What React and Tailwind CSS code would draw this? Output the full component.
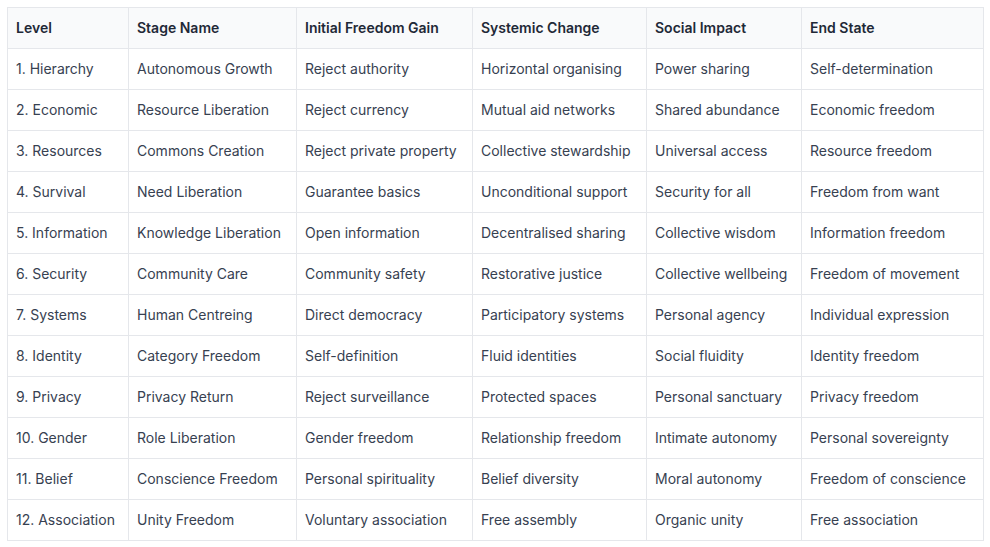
const rows = [
  ["1. Hierarchy","Autonomous Growth","Reject authority","Horizontal organising","Power sharing","Self-determination"],
  ["2. Economic","Resource Liberation","Reject currency","Mutual aid networks","Shared abundance","Economic freedom"],
  ["3. Resources","Commons Creation","Reject private property","Collective stewardship","Universal access","Resource freedom"],
  ["4. Survival","Need Liberation","Guarantee basics","Unconditional support","Security for all","Freedom from want"],
  ["5. Information","Knowledge Liberation","Open information","Decentralised sharing","Collective wisdom","Information freedom"],
  ["6. Security","Community Care","Community safety","Restorative justice","Collective wellbeing","Freedom of movement"],
  ["7. Systems","Human Centreing","Direct democracy","Participatory systems","Personal agency","Individual expression"],
  ["8. Identity","Category Freedom","Self-definition","Fluid identities","Social fluidity","Identity freedom"],
  ["9. Privacy","Privacy Return","Reject surveillance","Protected spaces","Personal sanctuary","Privacy freedom"],
  ["10. Gender","Role Liberation","Gender freedom","Relationship freedom","Intimate autonomy","Personal sovereignty"],
  ["11. Belief","Conscience Freedom","Personal spirituality","Belief diversity","Moral autonomy","Freedom of conscience"],
  ["12. Association","Unity Freedom","Voluntary association","Free assembly","Organic unity","Free association"],
];
const headers = ["Level","Stage Name","Initial Freedom Gain","Systemic Change","Social Impact","End State"];
const widths = [121,168,176,174,155,182];

export default function App() {
  return (
    <div className="bg-white p-[7px] font-['Inter',sans-serif] text-sm">
      <table className="table-fixed border-collapse w-[976px]">
        <colgroup>
          {widths.map((w, i) => <col key={i} style={{ width: w }} />)}
        </colgroup>
        <thead>
          <tr className="bg-[#f9fafb]">
            {headers.map((h) => (
              <th key={h} className="border border-[#e5e7eb] px-2 h-[41px] text-left font-semibold text-[#1f2937] leading-5 whitespace-nowrap">{h}</th>
            ))}
          </tr>
        </thead>
        <tbody>
          {rows.map((r, i) => (
            <tr key={i}>
              {r.map((c, j) => (
                <td key={j} className="border border-[#e5e7eb] px-2 h-[41px] text-[#374151] leading-5 whitespace-nowrap">{c}</td>
              ))}
            </tr>
          ))}
        </tbody>
      </table>
    </div>
  );
}
